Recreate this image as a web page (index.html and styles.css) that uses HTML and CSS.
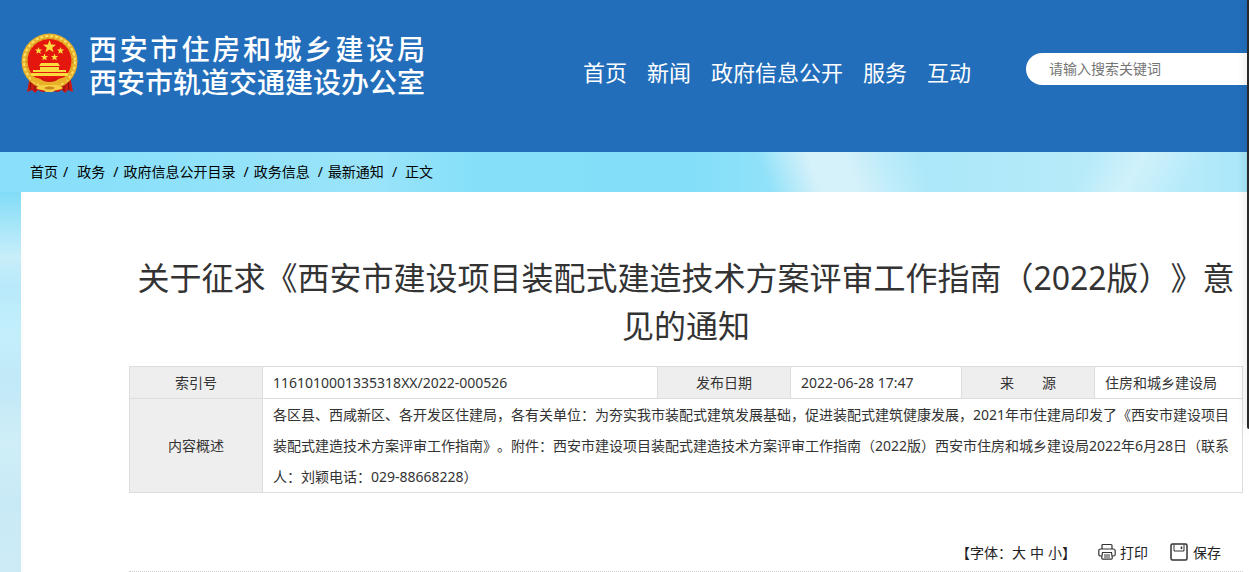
FILE: index.html
```html
<!DOCTYPE html>
<html lang="zh-CN">
<head>
<meta charset="utf-8">
<meta name="viewport" content="width=device-width, initial-scale=1">
<title>西安市住房和城乡建设局</title>
<link rel="stylesheet" href="styles.css">
</head>
<body>
<header class="site-header">
  <div class="brand">
    <svg class="emblem" viewBox="0 0 57 62" aria-hidden="true">
      <path d="M9 42L6 59l5-2 3 3 3-3 4 2 7-1h3l6 1 4-2 3 3 3-3 5 2-3-17z" fill="#c91a14"/>
      <path d="M10 48l-1 9M14 50v8M47 48l1 9M43 50v8" stroke="#7d120c" stroke-width="1"/>
      <circle cx="28.500" cy="28.500" r="28" fill="#e8b02a"/>
      <circle cx="28.500" cy="28.500" r="25.500" fill="none" stroke="#fbe067" stroke-width="2" stroke-dasharray="3 2"/>
      <circle cx="28.500" cy="28.500" r="23" fill="none" stroke="#c98a12" stroke-width="1" stroke-dasharray="2 3"/>
      <circle cx="28.500" cy="28" r="22" fill="#e4170f"/>
      <g fill="#fbdc3f">
        <path d="M28.500 7l1.700 4.500 4.800.2-3.800 3 1.400 4.600-4.100-2.700-4.100 2.700 1.400-4.600-3.800-3 4.800-.2z"/>
        <path d="M17.500 14l1 2.400 2.600.2-2 1.700.7 2.500-2.300-1.400-2.200 1.400.7-2.500-2-1.700 2.600-.2z"/>
        <path d="M39.500 14l1 2.400 2.600.2-2 1.700.7 2.500-2.300-1.400-2.200 1.400.7-2.500-2-1.700 2.600-.2z"/>
        <path d="M23.500 20.500l1 2.400 2.600.2-2 1.700.7 2.500-2.300-1.400-2.200 1.400.7-2.500-2-1.700 2.600-.2z"/>
        <path d="M33.500 20.500l1 2.400 2.600.2-2 1.700.7 2.500-2.300-1.400-2.200 1.400.7-2.500-2-1.700 2.600-.2z"/>
        <path d="M20 30h17l2 3H18zM19 34h19v3H19zM12 37h33v2H12zM10 40h37v3H10z"/>
      </g>
      <path d="M9 44c10 0 11 4 19.500 4S38 44 48 44l-3 5c-5 0-6 4-11 5h-11c-5-1-6-5-11-5z" fill="#e9b128"/>
      <path d="M20 46c3-2 6 1 8.500 1s5.500-3 8.500-1c-1 2-5 3-8.500 3S21 48 20 46z" fill="#d0180f"/>
      <path d="M15 55c4-4 9-3 13.500-3s9.500-1 13.500 3c-4 3-8 1-10 4h-7c-2-3-6-1-10-4z" fill="#f7cf43"/>
      <path d="M23 55c3-2 8-2 11 0-3 2-8 2-11 0z" fill="#c8871a"/>
    </svg>
    <div class="brand-name">
      <div>西安市住房和城乡建设局</div>
      <div>西安市轨道交通建设办公室</div>
    </div>
  </div>
  <nav class="main-nav" aria-label="主导航">
    <a href="#">首页</a>
    <a href="#">新闻</a>
    <a href="#">政府信息公开</a>
    <a href="#">服务</a>
    <a href="#">互动</a>
  </nav>
  <input class="search" type="text" placeholder="请输入搜索关键词" aria-label="请输入搜索关键词">
</header>

<div class="page">
  <nav class="breadcrumb" aria-label="当前位置">
    <a href="#">首页</a><span class="sep sep-first">/</span>
    <a href="#">政务</a><span class="sep">/</span>
    <a href="#">政府信息公开目录</a><span class="sep">/</span>
    <a href="#">政务信息</a><span class="sep">/</span>
    <a href="#">最新通知</a><span class="sep sep-last">/</span>
    <span>正文</span>
  </nav>

  <main class="article">
    <h1 class="title">关于征求《西安市建设项目装配式建造技术方案评审工作指南（2022版）》意见的通知</h1>
    <table class="info">
      <colgroup>
        <col class="col-label"><col class="col-index">
        <col class="col-label"><col class="col-date">
        <col class="col-label"><col>
      </colgroup>
      <tbody>
        <tr>
          <th scope="row">索引号</th>
          <td>1161010001335318XX/2022-000526</td>
          <th scope="row">发布日期</th>
          <td>2022-06-28 17:47</td>
          <th scope="row">来　　源</th>
          <td>住房和城乡建设局</td>
        </tr>
        <tr>
          <th scope="row">内容概述</th>
          <td colspan="5">各区县、西咸新区、各开发区住建局，各有关单位：为夯实我市装配式建筑发展基础，促进装配式建筑健康发展，2021年市住建局印发了《西安市建设项目装配式建造技术方案评审工作指南》。附件：西安市建设项目装配式建造技术方案评审工作指南（2022版）西安市住房和城乡建设局2022年6月28日（联系人：刘颖电话：029-88668228）</td>
        </tr>
      </tbody>
    </table>

    <div class="tools">
      <div class="font-size">
        <span>【字体：</span><button type="button">大</button><button type="button" class="spaced">中</button><button type="button">小</button><span>】</span>
      </div>
      <button type="button" class="tool">
        <svg width="18" height="18" viewBox="0 0 18 18" fill="none" stroke="#333" stroke-width="1.200" aria-hidden="true">
          <path d="M4 6V2.500Q4 1.500 5 1.500h8q1 0 1 1V6"/>
          <path d="M4 13H2.500Q.8 13 .8 11.500V8Q.8 6 2.800 6h12.400q2 0 2 2v3.500q0 1.500-1.700 1.500H14"/>
          <path d="M4.500 9.500h9l.8 5.500q0 1.200-1 1.200H4.700q-1 0-1-1.200zM6 12h6M6 14h6"/>
        </svg>
        打印
      </button>
      <button type="button" class="tool tool-save">
        <svg width="18" height="18" viewBox="0 0 18 18" fill="none" stroke="#333" stroke-width="1.500" aria-hidden="true">
          <rect x="1" y="1" width="16" height="16" rx="1.500"/>
          <path d="M4 1.500V8h10V1.500" stroke-width="1"/>
          <path d="M11.500 3.500V6" stroke-width="1.500"/>
        </svg>
        保存
      </button>
    </div>
  </main>
</div>
<div class="edge-panel" aria-hidden="true"></div>
</body>
</html>
```

FILE: styles.css
```css
* {
  box-sizing: border-box;
}

body {
  margin: 0;
  overflow: hidden;
  color: #333;
  font-family: "Noto Sans", "Noto Sans CJK SC", sans-serif;
  font-size: 14px;
  text-spacing-trim: space-all;
}

a {
  color: inherit;
  text-decoration: none;
}

button {
  padding: 0;
  border: 0;
  background: none;
  color: inherit;
  font: inherit;
  cursor: pointer;
}

/* Header */
.site-header {
  display: flex;
  align-items: flex-start;
  height: 152px;
  padding-left: 21px;
  background: #226ebb;
  color: #fff;
}

.brand {
  display: flex;
  gap: 11px;
  padding-top: 33px;
}

.emblem {
  width: 57px;
  height: 62px;
}

.brand-name {
  width: 336px;
  font-size: 28px;
  font-weight: 500;
  line-height: 33px;
  text-align-last: justify;
  white-space: nowrap;
}

.main-nav {
  display: flex;
  gap: 20px;
  margin-left: auto;
  padding-top: 56px;
  font-size: 22px;
  line-height: 32px;
  white-space: nowrap;
}

.search {
  width: 223px;
  height: 32px;
  margin: 53px 0 0 55px;
  padding: 0 23px 2px;
  border: 0;
  border-radius: 16px 0 0 16px;
  background: #fff;
  color: #333;
  font: inherit;
  font-size: 14px;
}

.search::placeholder {
  color: #757575;
}

/* Sky behind the page */
.page {
  min-height: calc(100vh - 152px);
  padding-left: 21px;
  background: linear-gradient(#8be0fa 0, #82dcf7 40px, #a8e6f9 75px, #c8eef9 105px, #b8e9fa 135px, #c3effb 180px, #c1e9f7 230px, #cfeef8 290px, #c8eaf6 350px, #cdebf6 420px);
}

.breadcrumb {
  display: flex;
  align-items: center;
  height: 40px;
  margin-left: -21px;
  padding-left: 30px;
  background:
    linear-gradient(120deg, transparent 86%, rgba(224, 246, 252, .6) 90%, transparent 95%),
    linear-gradient(70deg, transparent 61%, #d5f1fa 65%, #d5f1fa 68%, transparent 74%),
    linear-gradient(90deg, #8ae0fa 0, #8ae0fa 8%, #9ae4f9 30%, #85dff9 38%, #82def9 55%, #a8e7f9 72%, #b8ebf9 88%, #b4eafa 96%, #a6e6f9 100%);
  color: #000;
  line-height: 20px;
  white-space: nowrap;
}

.sep {
  padding: 0 5px 0 8px;
}

.sep-first {
  padding: 0 9px 0 5px;
}

.sep-last {
  padding: 0 8px 0 8px;
}

/* Article */
.article {
  min-height: calc(100vh - 192px);
  padding: 62px 6px 0 108px;
  background: #fff;
}

.title {
  margin: 0 0 16px;
  font-size: 32px;
  font-weight: 400;
  line-height: 48px;
  text-align: center;
}

.info {
  width: 100%;
  border-collapse: collapse;
  table-layout: fixed;
  line-height: 31px;
}

.info th,
.info td {
  padding: 0 10px;
  border: 1px solid #ddd;
}

.info th {
  background: #eee;
  font-weight: 400;
  text-align: center;
}

.col-label {
  width: 133px;
}

.col-index {
  width: 395px;
}

.col-date {
  width: 171px;
}

.tools {
  display: flex;
  align-items: center;
  justify-content: flex-end;
  height: 37px;
  margin-top: 42px;
  padding: 0 22px 2px 0;
  border-bottom: 1px dotted #ccc;
  color: #222;
}

.font-size {
  display: flex;
  margin-right: 22px;
}

.spaced {
  margin: 0 4px;
}

.tool {
  display: flex;
  align-items: center;
  gap: 4px;
}

.tool-save {
  gap: 5px;
  margin-left: 22px;
}

/* Panel docked on the right edge of the window */
.edge-panel {
  position: fixed;
  top: 0;
  right: 0;
  width: 2px;
  height: 429px;
  border-radius: 0 0 0 2px;
  background: #292929;
  box-shadow: 0 0 8px rgba(0, 0, 0, .3);
}
```
